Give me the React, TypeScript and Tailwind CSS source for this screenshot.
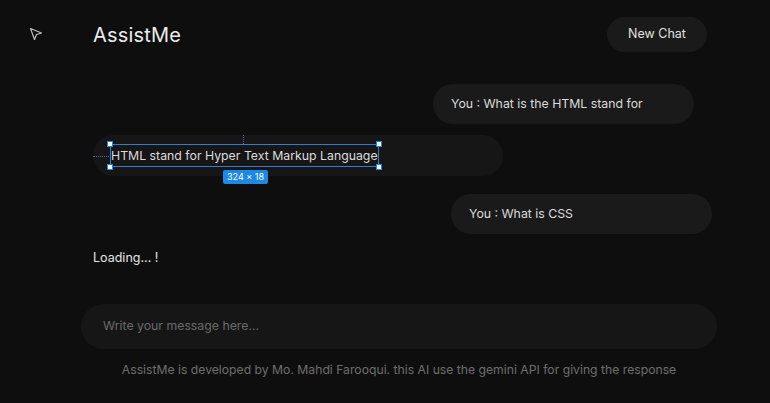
import React from 'react';

const font = { fontFamily: 'Inter, "Liberation Sans", sans-serif' };

function Handle({ className }: { className: string }) {
  return <span className={`absolute w-[6px] h-[6px] bg-white border border-[#1e88e5] ${className}`} />;
}

export default function App() {
  return (
    <div style={font} className="relative w-[770px] h-[403px] bg-[#0e0e0f] text-[#e6e6e6] overflow-hidden">
      {/* cursor */}
      <svg className="absolute left-[29px] top-[27px]" width="14" height="14" viewBox="0 0 14 14" fill="none">
        <path d="M1.5 1.5 L12.5 6 L7.5 7.5 L5.5 12.5 Z" stroke="#bdbdbd" strokeWidth="1.2" strokeLinejoin="round" />
      </svg>

      <div className="w-[636px] ml-[81px] flex flex-col">
        <div className="flex items-center justify-between pl-[12px] pr-[10px] pt-[17px]">
          <div className="text-[20px] text-[#ececec] tracking-[0.2px]">AssistMe</div>
          <button className="h-[35px] w-[100px] rounded-full bg-[#1a1a1a] text-[12.5px] text-[#e0e0e0]">New Chat</button>
        </div>

        <div className="flex flex-col mt-[32px] pl-[12px] pr-[5px]">
          <div className="self-end mr-[18px] h-[40px] w-[261px] rounded-full bg-[#1a1a1a] flex items-center pl-[18px] text-[12.3px] text-[#dcdcdc]">
            You : What is the HTML stand for
          </div>

          <div className="mt-[11px] h-[41px] w-[410px] rounded-full bg-[#161616] flex items-center pl-[18px] text-[12.3px] text-[#dcdcdc]">
            <span className="relative leading-[18px]">
              HTML stand for Hyper Text Markup Language
              <span className="absolute -left-[1px] -right-[1px] top-[-3px] bottom-[-2px] border border-[#2f7fd1]" />
              <span className="absolute -left-[18px] top-[9px] w-[16px] border-t border-dotted border-[#4a6fa0]" />
              <span className="absolute left-[132px] top-[-12px] h-[9px] border-l border-dotted border-[#4a6fa0]" />
              <Handle className="-left-[4px] top-[-6px]" />
              <Handle className="-right-[4px] top-[-6px]" />
              <Handle className="-left-[4px] bottom-[-5px]" />
              <Handle className="-right-[4px] bottom-[-5px]" />
              <span className="absolute left-[112px] top-[23px] h-[14px] px-[4px] rounded-[2px] bg-[#1e88e5] text-white text-[9px] leading-[14px] whitespace-nowrap">324 × 18</span>
            </span>
          </div>

          <div className="self-end mt-[18px] h-[40px] w-[261px] rounded-full bg-[#1a1a1a] flex items-center pl-[18px] text-[12.3px] text-[#dcdcdc]">
            You : What is CSS
          </div>

          <div className="mt-[15px] text-[12.5px] text-[#e6e6e6]">Loading... !</div>
        </div>

        <div className="mt-[36px] h-[45px] rounded-full bg-[#161616] flex items-center pl-[22px] text-[12.3px] text-[#6a6a6a]">
          Write your message here...
        </div>

        <div className="mt-[12px] text-center text-[12.2px] text-[#6e6e6e]">
          AssistMe is developed by Mo. Mahdi Farooqui. this AI use the gemini API for giving the response
        </div>
      </div>
    </div>
  );
}
